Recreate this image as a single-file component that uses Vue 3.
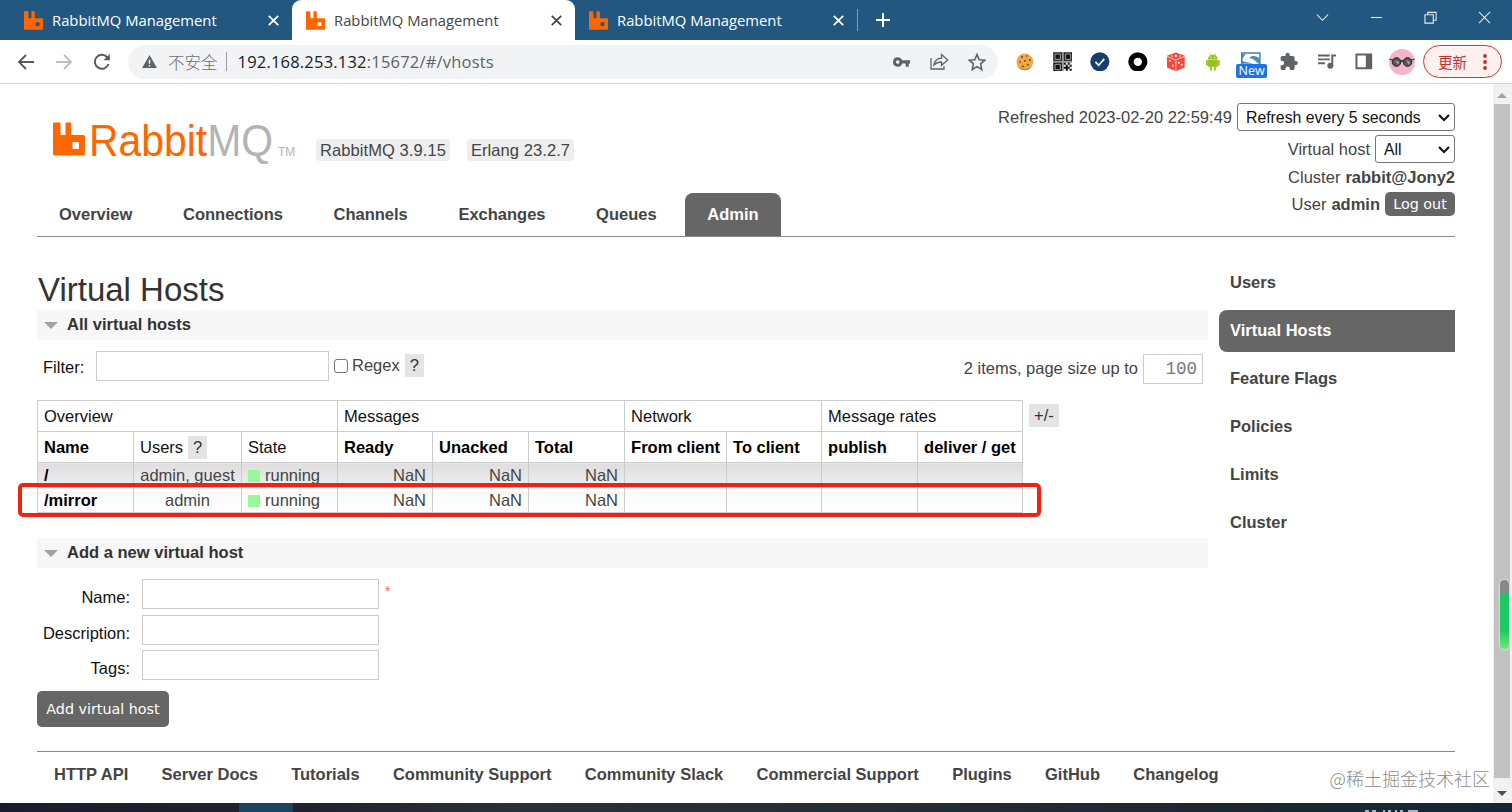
<!-- App.vue -->
<template>
  <div class="window">
    <header class="tab-bar">
      <div v-for="(tab, i) in tabs" :key="i" class="tab" :class="{ active: tab.active }">
        <svg class="favicon" viewBox="0 0 32 34" preserveAspectRatio="none"><path :d="rabbit" fill="#ff6600" fill-rule="evenodd" /></svg>
        <span class="tab-title">RabbitMQ Management</span>
        <svg class="tab-close" viewBox="0 0 10 10"><path d="M.7.7l8.6 8.6M9.3.7L.7 9.3" /></svg>
      </div>
      <span class="tab-divider"></span>
      <svg class="new-tab" viewBox="0 0 14 14"><path d="M7 0v14M0 7h14" /></svg>
      <div class="window-buttons">
        <svg viewBox="0 0 14 14"><path d="M1 4l6 6 6-6" /></svg>
        <svg viewBox="0 0 14 14"><path d="M1 7h12" /></svg>
        <svg viewBox="0 0 14 14"><path d="M1 4h9v9H1zM4 4V1.5h9V10h-3" /></svg>
        <svg viewBox="0 0 14 14"><path d="M1 1l12 12M13 1L1 13" /></svg>
      </div>
    </header>

    <div class="toolbar">
      <svg class="nav-icon" viewBox="0 0 18 18"><path d="M17 9H2M9 2L2 9l7 7" /></svg>
      <svg class="nav-icon disabled" viewBox="0 0 18 18"><path d="M1 9h15M9 2l7 7-7 7" /></svg>
      <svg class="nav-icon" viewBox="0 0 18 18"><path d="M15.5 11A7 7 0 1 1 14 4l2 2.2" /><path d="M16.8 1v6.3h-6.3z" class="solid" /></svg>
      <div class="address">
        <svg class="warning" viewBox="0 0 16 14"><path d="M8 0l8 14H0z" fill="#5f6368" /><path d="M8 5v4.5M8 10.8v1.7" stroke="#f1f3f4" stroke-width="1.6" /></svg>
        <span class="insecure">不安全</span>
        <span class="address-divider"></span>
        <span class="url"><b>192.168.253.132</b>:15672/#/vhosts</span>
        <svg class="key" viewBox="0 0 18 10"><path fill-rule="evenodd" fill="#5f6368" d="M5 0a5 5 0 0 1 4.7 3.2H18v3.5h-1.3V10h-3.2V6.7H9.7A5 5 0 1 1 5 0zm0 3.2a1.9 1.9 0 1 0 0 3.8 1.9 1.9 0 0 0 0-3.8z" /></svg>
        <svg class="share" viewBox="0 0 19 17"><path d="M1 5v11h13v-3M4 12c.6-4.5 3.3-6.7 7.5-6.8V1.5L17.7 7l-6.2 5.3V9C8.3 8.9 6 9.900 4 12z" /></svg>
        <svg class="star" viewBox="0 0 18 18"><path d="M9 1.500l2.200 5.200 5.600.5-4.200 3.700 1.200 5.600L9 13.600l-4.800 2.900 1.200-5.600L1.200 7.200l5.600-.5z" /></svg>
      </div>

      <div class="extensions">
        <svg viewBox="0 0 20 20">
          <circle cx="10" cy="10" r="8.500" fill="#edaa4b" />
          <path d="M2 13a8.500 8.500 0 0 0 15.500 1A10 10 0 0 1 2 13z" fill="#cf8125" />
          <g fill="#70401e"><circle cx="7" cy="5" r="1" /><circle cx="12" cy="4" r=".8" /><circle cx="15" cy="8" r="1" /><circle cx="10" cy="9" r="1" /><circle cx="5" cy="10" r=".9" /><circle cx="13" cy="13" r="1" /><circle cx="8" cy="14.500" r="1" /></g>
        </svg>
        <svg viewBox="0 0 20 20">
          <path d="M0 0h20v20H0z" fill="#999" />
          <path d="M.5.5h8.500v8.500H.5zM11 .5h8.500v8.500H11zM.5 11h8.500v8.500H.5z" fill="#111" />
          <g fill="none" stroke="#aaa"><path d="M2 2h5.500v5.500H2zM12.500 2H18v5.500h-5.500zM2 12.500h5.500V18H2z" /></g>
          <path d="M11 11h9v9h-9z" fill="#eee" />
          <path d="M11 11h2v2h2v-2h2v2h-2v2h2v-2h2v2h-2v2h2v2h-2v-2h-2v2h-2v-2h-2v-2h2v-2h-2z" fill="#111" />
        </svg>
        <svg viewBox="0 0 20 20"><circle cx="10" cy="10" r="9.700" fill="#173e6c" /><path d="M5.500 10l3.300 3.500 5.700-6.500" fill="none" stroke="#fff" stroke-width="1.700" /></svg>
        <svg viewBox="0 0 20 20"><circle cx="10" cy="10" r="7" fill="#fff" stroke="#000" stroke-width="5.500" /></svg>
        <svg viewBox="0 0 20 20">
          <path d="M10 .5l9 3.300v12L10 19.500 1 15.800v-12z" fill="#f94636" />
          <path d="M1 4.500L10 8l9-3.500M10 8v11" stroke="#fff" stroke-width=".8" fill="none" />
          <g fill="#fff"><circle cx="10" cy="4" r="1.200" /><circle cx="6" cy="4" r=".8" /><circle cx="14" cy="4" r=".8" /><circle cx="4" cy="9" r="1" /><circle cx="7" cy="14" r="1" /><circle cx="13" cy="11" r="1" /><circle cx="16" cy="13" r="1" /></g>
        </svg>
        <svg viewBox="0 0 20 20">
          <path d="M5 8.200h10V15H5zM5 7.500a5 4.800 0 0 1 10 0z" fill="#97c024" />
          <path d="M7 1.700l1.500 2.200M13 1.700l-1.500 2.200" stroke="#97c024" />
          <path d="M4 9v4M16 9v4M8 15v3M12 15v3" stroke="#97c024" stroke-width="1.900" stroke-linecap="round" />
          <circle cx="8" cy="5.500" r=".6" fill="#fff" /><circle cx="12" cy="5.500" r=".6" fill="#fff" />
        </svg>
        <span class="picture-ext">
          <svg viewBox="0 0 20 20"><path d="M.8 1h18.400v14H.8z" fill="#fff" stroke="#3d81b5" stroke-width="1.500" /><path d="M1 2h4C3 4 2 6 1 8zM8 6c4-3 8-2 11 1v5c-3 0-4-5-11-6zM1 9c3 2 7 1 11 3H1z" fill="#4b8fc2" /></svg>
          <span class="new-badge">New</span>
        </span>
        <svg viewBox="0 0 24 24"><path fill="#5f6368" d="M20.500 11H19V7a2 2 0 0 0-2-2h-4V3.500a2.500 2.500 0 0 0-5 0V5H4a2 2 0 0 0-2 2v3.800h1.500a2.700 2.700 0 0 1 0 5.400H2V20a2 2 0 0 0 2 2h3.800v-1.500a2.700 2.700 0 0 1 5.400 0V22H17a2 2 0 0 0 2-2v-4h1.500a2.500 2.500 0 0 0 0-5z" /></svg>
        <svg viewBox="0 0 20 20"><path d="M1 3.500h12M1 7.500h12M1 11.500h7M15.500 14V3.500H20" fill="none" stroke="#5f6368" stroke-width="2" /><circle cx="13.500" cy="14" r="3" fill="#5f6368" /></svg>
        <svg viewBox="0 0 20 20"><path d="M2.500 2.500h15v14h-15z" fill="none" stroke="#5f6368" stroke-width="2" /><path d="M12 2h6v15h-6z" fill="#5f6368" /></svg>
      </div>
      <svg class="avatar" viewBox="0 0 26 26">
        <circle cx="13" cy="13" r="13" fill="#f7b3cb" />
        <path d="M.5 10l4 1.500M25.500 10l-4 1.500M11 12.500q2-1.500 4 0" fill="none" stroke="#333" stroke-width="1.300" />
        <circle cx="7.500" cy="13" r="4.300" fill="#555" stroke="#222" /><circle cx="18.500" cy="13" r="4.300" fill="#555" stroke="#222" />
        <path d="M6 11l4 2-1 3zM17 11l4 2-1 3z" fill="#aaa" />
      </svg>
      <div class="update">更新<svg viewBox="0 0 4 16"><circle cx="2" cy="2" r="1.900" /><circle cx="2" cy="8" r="1.900" /><circle cx="2" cy="14" r="1.900" /></svg></div>
    </div>

    <div class="viewport">
      <div class="page">
        <div class="header">
          <div class="header-left">
            <div class="brand">
              <svg class="logo-mark" viewBox="0 0 32 34"><path :d="rabbit" fill="#ff6600" fill-rule="evenodd" /></svg>
              <svg class="logo-text" viewBox="0 0 186 50">
                <text x="0" y="40.500" font-size="45" textLength="184" lengthAdjust="spacingAndGlyphs" fill="#f60">Rabbit<tspan fill="#b4b4b4">MQ</tspan></text>
              </svg>
              <span class="tm">TM</span>
              <span class="version">RabbitMQ 3.9.15</span>
              <span class="version">Erlang 23.2.7</span>
            </div>
            <nav class="main-nav">
              <a v-for="item in mainNav" :key="item" :class="{ selected: item === 'Admin' }">{{ item }}</a>
            </nav>
          </div>
          <div class="status">
            <div class="status-row">Refreshed 2023-02-20 22:59:49
              <span class="select refresh">Refresh every 5 seconds<svg viewBox="0 0 12 8"><path d="M1 1l5 5 5-5" /></svg></span>
            </div>
            <div class="status-row">Virtual host
              <span class="select vhost">All<svg viewBox="0 0 12 8"><path d="M1 1l5 5 5-5" /></svg></span>
            </div>
            <div class="status-row text">Cluster <b>rabbit@Jony2</b></div>
            <div class="status-row text">User <b>admin</b> <button class="logout">Log out</button></div>
          </div>
        </div>

        <div class="content">
          <main>
            <h1>Virtual Hosts</h1>
            <h2><i class="arrow"></i>All virtual hosts</h2>

            <div class="filter">
              <label>Filter:</label>
              <input type="text" class="filter-input" />
              <span class="checkbox"></span>
              <span class="regex">Regex</span>
              <span class="help">?</span>
              <span class="paging">2 items, page size up to</span>
              <span class="page-size">100</span>
            </div>

            <div class="table-area">
              <table>
                <colgroup><col v-for="(w, i) in colWidths" :key="i" :style="{ width: w + 'px' }" /></colgroup>
                <thead>
                  <tr>
                    <th v-for="g in groups" :key="g.name" :colspan="g.span">{{ g.name }}</th>
                  </tr>
                  <tr>
                    <th v-for="c in columns" :key="c.name" :class="{ sortable: c.sort }">{{ c.name }}<span v-if="c.help" class="help">?</span></th>
                  </tr>
                </thead>
                <tbody>
                  <tr v-for="row in vhosts" :key="row.name">
                    <td class="name">{{ row.name }}</td>
                    <td class="users">{{ row.users }}</td>
                    <td><i class="dot"></i>running</td>
                    <td v-for="n in 3" :key="n" class="num">NaN</td>
                    <td v-for="n in 4" :key="'r' + n"></td>
                  </tr>
                </tbody>
              </table>
              <span class="help toggle">+/-</span>
              <div class="highlight"></div>
            </div>

            <h2 class="add-title"><i class="arrow"></i>Add a new virtual host</h2>
            <form class="add-form">
              <template v-for="field in fields" :key="field">
                <label>{{ field }}:</label>
                <input type="text" />
                <span class="mand">{{ field === 'Name' ? '*' : '' }}</span>
              </template>
            </form>
            <button class="submit">Add virtual host</button>
          </main>
          <aside>
            <a v-for="item in sideNav" :key="item" :class="{ selected: item === 'Virtual Hosts' }">{{ item }}</a>
          </aside>
        </div>

        <footer>
          <a v-for="link in footerLinks" :key="link">{{ link }}</a>
        </footer>
      </div>
      <div class="scrollbar">
        <i class="up"></i>
        <div class="thumb"></div>
        <i class="down"></i>
        <div class="meter"></div>
      </div>
      <div class="watermark">@稀土掘金技术社区</div>
    </div>
    <div class="taskbar">
      <span class="task"></span>
      <svg class="clock" viewBox="0 0 56 2"><path d="M1 1h4M8 1h4M19 1h2M24 1h3M31 1h2M36 1h3M44 1h10" /></svg>
    </div>
  </div>
</template>

<script setup>
const rabbit = 'M1 .5h5.500q1 0 1 1V13h5V1.500q0-1 1-1h3.700q1 0 1 1V13h12q1.800 0 1.800 1.800V32q0 1.500-1.500 1.500H1.500Q0 33.500 0 32V1.500q0-1 1-1zM19.500 20.500v5.500q0 1 1 1h4.500q1 0 1-1v-5q0-1-1-1h-4.500q-1 0-1 1z'

const tabs = [{ active: false }, { active: true }, { active: false }]

const mainNav = ['Overview', 'Connections', 'Channels', 'Exchanges', 'Queues', 'Admin']
const sideNav = ['Users', 'Virtual Hosts', 'Feature Flags', 'Policies', 'Limits', 'Cluster']
const footerLinks = [
  'HTTP API', 'Server Docs', 'Tutorials', 'Community Support', 'Community Slack',
  'Commercial Support', 'Plugins', 'GitHub', 'Changelog'
]

const colWidths = [96, 108, 96, 95, 96, 96, 102, 95, 96, 105]
const groups = [
  { name: 'Overview', span: 3 },
  { name: 'Messages', span: 3 },
  { name: 'Network', span: 2 },
  { name: 'Message rates', span: 2 }
]
const columns = [
  { name: 'Name', sort: true },
  { name: 'Users', help: true },
  { name: 'State' },
  { name: 'Ready', sort: true },
  { name: 'Unacked', sort: true },
  { name: 'Total', sort: true },
  { name: 'From client', sort: true },
  { name: 'To client', sort: true },
  { name: 'publish', sort: true },
  { name: 'deliver / get', sort: true }
]
const vhosts = [
  { name: '/', users: 'admin, guest' },
  { name: '/mirror', users: 'admin' }
]
const fields = ['Name', 'Description', 'Tags']
</script>

<style>
body {
  margin: 0;
  overflow: hidden;
}
</style>

<style scoped>
* {
  box-sizing: border-box;
}

.window {
  width: 1512px;
  height: 812px;
  display: flex;
  flex-direction: column;
  overflow: hidden;
  background: #fff;
  font: 16.5px/20px "Liberation Sans", Arial, sans-serif;
  color: #444;
  white-space: nowrap;
}

svg {
  display: block;
  flex: none;
}

/* browser tabs */
.tab-bar {
  height: 40px;
  flex: none;
  display: flex;
  align-items: center;
  padding-left: 10px;
  background: #22577f;
  color: #fff;
}

.tab {
  width: 282px;
  height: 40px;
  padding: 0 13px 0 14px;
  display: flex;
  align-items: center;
  font-family: "Open Sans", "Noto Sans", sans-serif;
  font-size: 14.8px;
}

.tab.active {
  width: 283px;
  background: #fff;
  color: #454545;
  border-radius: 9px 9px 0 0;
}

.favicon {
  width: 19px;
  height: 19px;
}

.tab-title {
  margin-left: 9px;
  flex: 1;
}

.tab-close {
  width: 11px;
  height: 11px;
  fill: none;
  stroke: currentColor;
  stroke-width: 1.6;
}

.tab-divider {
  width: 1px;
  height: 22px;
  background: #7f9db5;
}

.new-tab {
  width: 14px;
  height: 14px;
  margin-left: 18px;
  stroke: #fff;
  stroke-width: 2;
}

.window-buttons {
  margin: -6px 21px 0 auto;
  display: flex;
  gap: 41px;
}

.window-buttons svg {
  width: 13px;
  height: 13px;
  fill: none;
  stroke: #dfe9f0;
  stroke-width: 1.2;
}

/* address bar */
.toolbar {
  height: 44px;
  flex: none;
  display: flex;
  align-items: center;
  padding: 0 10px 0 17px;
  border-bottom: 1px solid #d3d5d8;
}

.nav-icon {
  width: 18px;
  height: 18px;
  margin-right: 20px;
  fill: none;
  stroke: #55585c;
  stroke-width: 1.9;
}

.nav-icon.disabled {
  stroke: #bcbec1;
}

.nav-icon .solid {
  fill: #55585c;
  stroke: none;
}

.address {
  width: 870px;
  flex: none;
  height: 34px;
  margin-left: -3px;
  padding: 0 12px 0 14px;
  display: flex;
  align-items: center;
  border-radius: 17px;
  background: #f1f3f4;
  font-family: "Open Sans", "Noto Sans", sans-serif;
}

.warning {
  width: 15px;
  height: 13px;
}

.insecure {
  margin-left: 11px;
  color: #6b6e72;
  font-family: "Noto Sans CJK SC", sans-serif;
  font-weight: 300;
}

.address-divider {
  width: 1px;
  height: 19px;
  margin: 0 11px 0 8px;
  background: #9c9fa3;
}

.url {
  flex: 1;
  color: #5f6368;
  letter-spacing: 0.2px;
}

.url b {
  font-weight: 400;
  color: #202124;
}

.key {
  width: 17px;
  height: 10px;
}

.share {
  width: 19px;
  height: 17px;
  margin-left: 20px;
  fill: none;
  stroke: #5f6368;
  stroke-width: 1.3;
}

.star {
  width: 18px;
  height: 18px;
  margin-left: 19px;
  fill: none;
  stroke: #5f6368;
  stroke-width: 1.6;
}

.extensions {
  display: flex;
  align-items: center;
  gap: 18px;
  margin-left: 17px;
}

.extensions svg {
  width: 19.7px;
  height: 19.7px;
}

.picture-ext {
  position: relative;
}

.new-badge {
  position: absolute;
  left: -5px;
  top: 12px;
  width: 31px;
  height: 14px;
  border-radius: 2px;
  background: #1a73e8;
  color: #fff;
  font: 12.5px/14px "Open Sans", sans-serif;
  text-align: center;
}

.avatar {
  width: 26px;
  height: 26px;
  margin-left: 15px;
}

.update {
  width: 79px;
  height: 33px;
  margin-left: auto;
  padding: 0 14px;
  display: flex;
  align-items: center;
  justify-content: space-between;
  flex: none;
  border: 1.5px solid #c5383b;
  border-radius: 17px;
  background: #fdf1f0;
  color: #c5302e;
  font: 14.5px "Noto Sans CJK SC", sans-serif;
}

.update svg {
  width: 4px;
  height: 16px;
  fill: #c5302e;
}

/* page */
.viewport {
  position: relative;
  display: flex;
  height: 719px;
}

.page {
  width: 1493px;
  padding: 0 38px 0 37px;
}

.header {
  height: 152.5px;
  display: flex;
  justify-content: space-between;
  border-bottom: 1px solid #888;
}

.header-left {
  display: flex;
  flex-direction: column;
  justify-content: space-between;
}

.brand {
  display: flex;
  align-items: flex-start;
  padding: 31px 0 0 16px;
}

.logo-mark {
  width: 32px;
  height: 34px;
  margin-top: 7px;
}

.logo-text {
  width: 186px;
  height: 50px;
  margin-left: 4px;
  font-family: "Liberation Sans", Arial, sans-serif;
}

.tm {
  width: 22px;
  margin-top: 27px;
  padding-left: 3px;
  color: #b4b4b4;
  font-size: 12px;
}

.version {
  height: 22px;
  margin: 24px 17px 0 19px;
  padding: 0 4px;
  border-radius: 4px;
  background: #eee;
  line-height: 22px;
  letter-spacing: 0.08px;
}

.version + .version {
  margin-left: 0;
}

.main-nav {
  display: flex;
  gap: 6.6px;
}

.main-nav a {
  height: 43px;
  padding: 0 22px;
  border-radius: 8px 8px 0 0;
  font-weight: bold;
  line-height: 43px;
}

.main-nav .selected,
aside .selected {
  background: #666;
  color: #fff;
}

.status {
  padding-top: 19px;
}

.status-row {
  height: 28px;
  margin-bottom: 4px;
  display: flex;
  align-items: center;
  justify-content: flex-end;
  gap: 5px;
}

.status-row.text {
  height: 27px;
  margin: -4px 0 4px;
}

.select {
  height: 28px;
  padding: 1px 4px 0 8px;
  display: flex;
  align-items: center;
  justify-content: space-between;
  border: 1px solid #777;
  border-radius: 3px;
  background: #fff;
  color: #111;
  font-size: 15.8px;
}

.select svg {
  width: 12px;
  height: 8px;
  fill: none;
  stroke: #111;
  stroke-width: 2;
}

.refresh {
  width: 218px;
}

.vhost {
  width: 80px;
}

button {
  border: 0;
  border-radius: 5px;
  background: #666;
  color: #fff;
  font: 14.3px "DejaVu Sans", Verdana, sans-serif;
}

.logout {
  width: 70px;
  height: 24px;
  padding: 0;
}

.content {
  height: 514.5px;
  display: flex;
  justify-content: space-between;
}

main {
  width: 1171px;
}

h1 {
  margin: 33.5px 0 0 1px;
  font-size: 33px;
  line-height: 40px;
  font-weight: normal;
  color: #333;
}

h2 {
  height: 30px;
  margin: 0;
  padding-left: 7px;
  display: flex;
  align-items: center;
  gap: 9px;
  background: #f7f7f7;
  color: #333;
  font-size: 16.55px;
}

.arrow {
  border: 7px solid transparent;
  border-top: 7px solid #a3a3a3;
  border-bottom: 0;
}

.filter {
  height: 50px;
  margin-top: 11px;
  padding: 0 5px 0 6px;
  display: flex;
  align-items: flex-start;
}

.filter label {
  width: 53px;
  line-height: 32px;
  color: #111;
}

input {
  height: 30px;
  border: 1px solid #ccc;
  background: #fff;
}

.filter-input {
  width: 233px;
}

.checkbox {
  width: 14px;
  height: 14px;
  margin: 8px 4px 0 5px;
  border: 1.5px solid #767676;
  border-radius: 3px;
}

.regex {
  line-height: 29px;
}

.help {
  display: inline-block;
  height: 23px;
  padding: 0 5px;
  background: #e4e4e4;
  color: #333;
  font-weight: normal;
  line-height: 23px;
}

.filter .help {
  margin: 3px 0 0 5px;
}

.paging {
  margin: 7px 5px 0 auto;
}

.page-size {
  width: 60px;
  height: 30px;
  margin-top: 3px;
  padding-right: 5px;
  border: 1px solid #ccc;
  color: #777;
  font: 17.5px/28px "Liberation Mono", monospace;
  text-align: right;
}

.table-area {
  position: relative;
  display: flex;
  align-items: flex-start;
  margin-top: -1px;
}

table {
  width: 986px;
  table-layout: fixed;
  border-collapse: collapse;
  color: #444;
}

th,
td {
  padding: 0 6px;
  border: 1px solid #ccc;
  text-align: left;
  overflow: hidden;
}

th {
  height: 31px;
  color: #111;
  font-weight: normal;
}

th.sortable,
.name {
  font-weight: bold;
  color: #000;
}

th .help {
  margin-left: 5px;
}

td {
  height: 25px;
  background: linear-gradient(#fafafa, #fff);
}

tr:first-child td {
  background: linear-gradient(#dedede, #efefef);
}

td:not(:empty) {
  padding-bottom: 1px;
}

.users {
  text-align: center;
}

.num {
  text-align: right;
}

.dot {
  display: inline-block;
  width: 12px;
  height: 12px;
  margin-right: 5px;
  background: #98f898;
  vertical-align: -1px;
}

.toggle {
  margin: 4px 0 0 6px;
}

.highlight {
  position: absolute;
  left: -19px;
  top: 83px;
  width: 1023px;
  height: 34px;
  border: 4px solid #f5210f;
  border-radius: 5px;
}

.add-title {
  margin-top: 25px;
}

.add-form {
  display: grid;
  grid-template-columns: 93px 237px auto;
  grid-auto-rows: 30px;
  gap: 5.5px 0;
  margin-top: 11px;
}

.add-form label {
  padding: 8px 0 0;
  color: #111;
  text-align: right;
}

.add-form input {
  margin-left: 12px;
  width: 237px;
}

.mand {
  margin-left: 18px;
  color: #f66;
  font-size: 14px;
  line-height: 25px;
}

.submit {
  width: 132px;
  height: 36px;
  margin-top: 11px;
  padding: 0;
}

aside {
  width: 236px;
  padding-top: 25px;
  display: flex;
  flex-direction: column;
  gap: 6px;
}

aside a {
  height: 42px;
  padding-left: 11px;
  border-radius: 8px 0 0 8px;
  font-weight: bold;
  line-height: 41px;
}

footer {
  display: flex;
  gap: 33.3px;
  padding: 12px 17px 0;
  border-top: 1px solid #888;
  font-weight: bold;
}

/* scrollbar */
.scrollbar {
  position: relative;
  width: 19px;
  padding: 0 2px 0 1px;
  display: flex;
  flex-direction: column;
  align-items: center;
  background: #f1f1f1;
}

.up {
  margin: 9px 0 6px;
  border: 5px solid transparent;
  border-top: 0;
  border-bottom: 5px solid #a3a3a3;
}

.thumb {
  width: 16px;
  height: 674px;
  background: #c1c1c1;
}

.down {
  margin-top: 13px;
  border: 5px solid transparent;
  border-bottom: 0;
  border-top: 5px solid #505050;
}

.meter {
  position: absolute;
  left: 7px;
  top: 496px;
  width: 9px;
  height: 69px;
  border-radius: 5px;
  background: linear-gradient(#888 0 14px, #1dc963 14px 50px, #6bea74);
  box-shadow: 0 0 2px 1px #ddd;
}

.watermark {
  position: absolute;
  right: 22px;
  top: 681px;
  color: #8d8d8d;
  font: 300 18px/26px "Noto Sans CJK SC", sans-serif;
}

.taskbar {
  height: 9px;
  flex: none;
  display: flex;
  justify-content: space-between;
  padding: 0 92px 0 239px;
  background: linear-gradient(90deg, #191d2b, #20232f 20%, #283238 35%, #1c2932 80%, #172633);
}

.task {
  width: 54px;
  background: #20425f;
}

.clock {
  width: 56px;
  height: 2px;
  align-self: flex-end;
  stroke: #dfe3e6;
  stroke-width: 1.5;
}
</style>
